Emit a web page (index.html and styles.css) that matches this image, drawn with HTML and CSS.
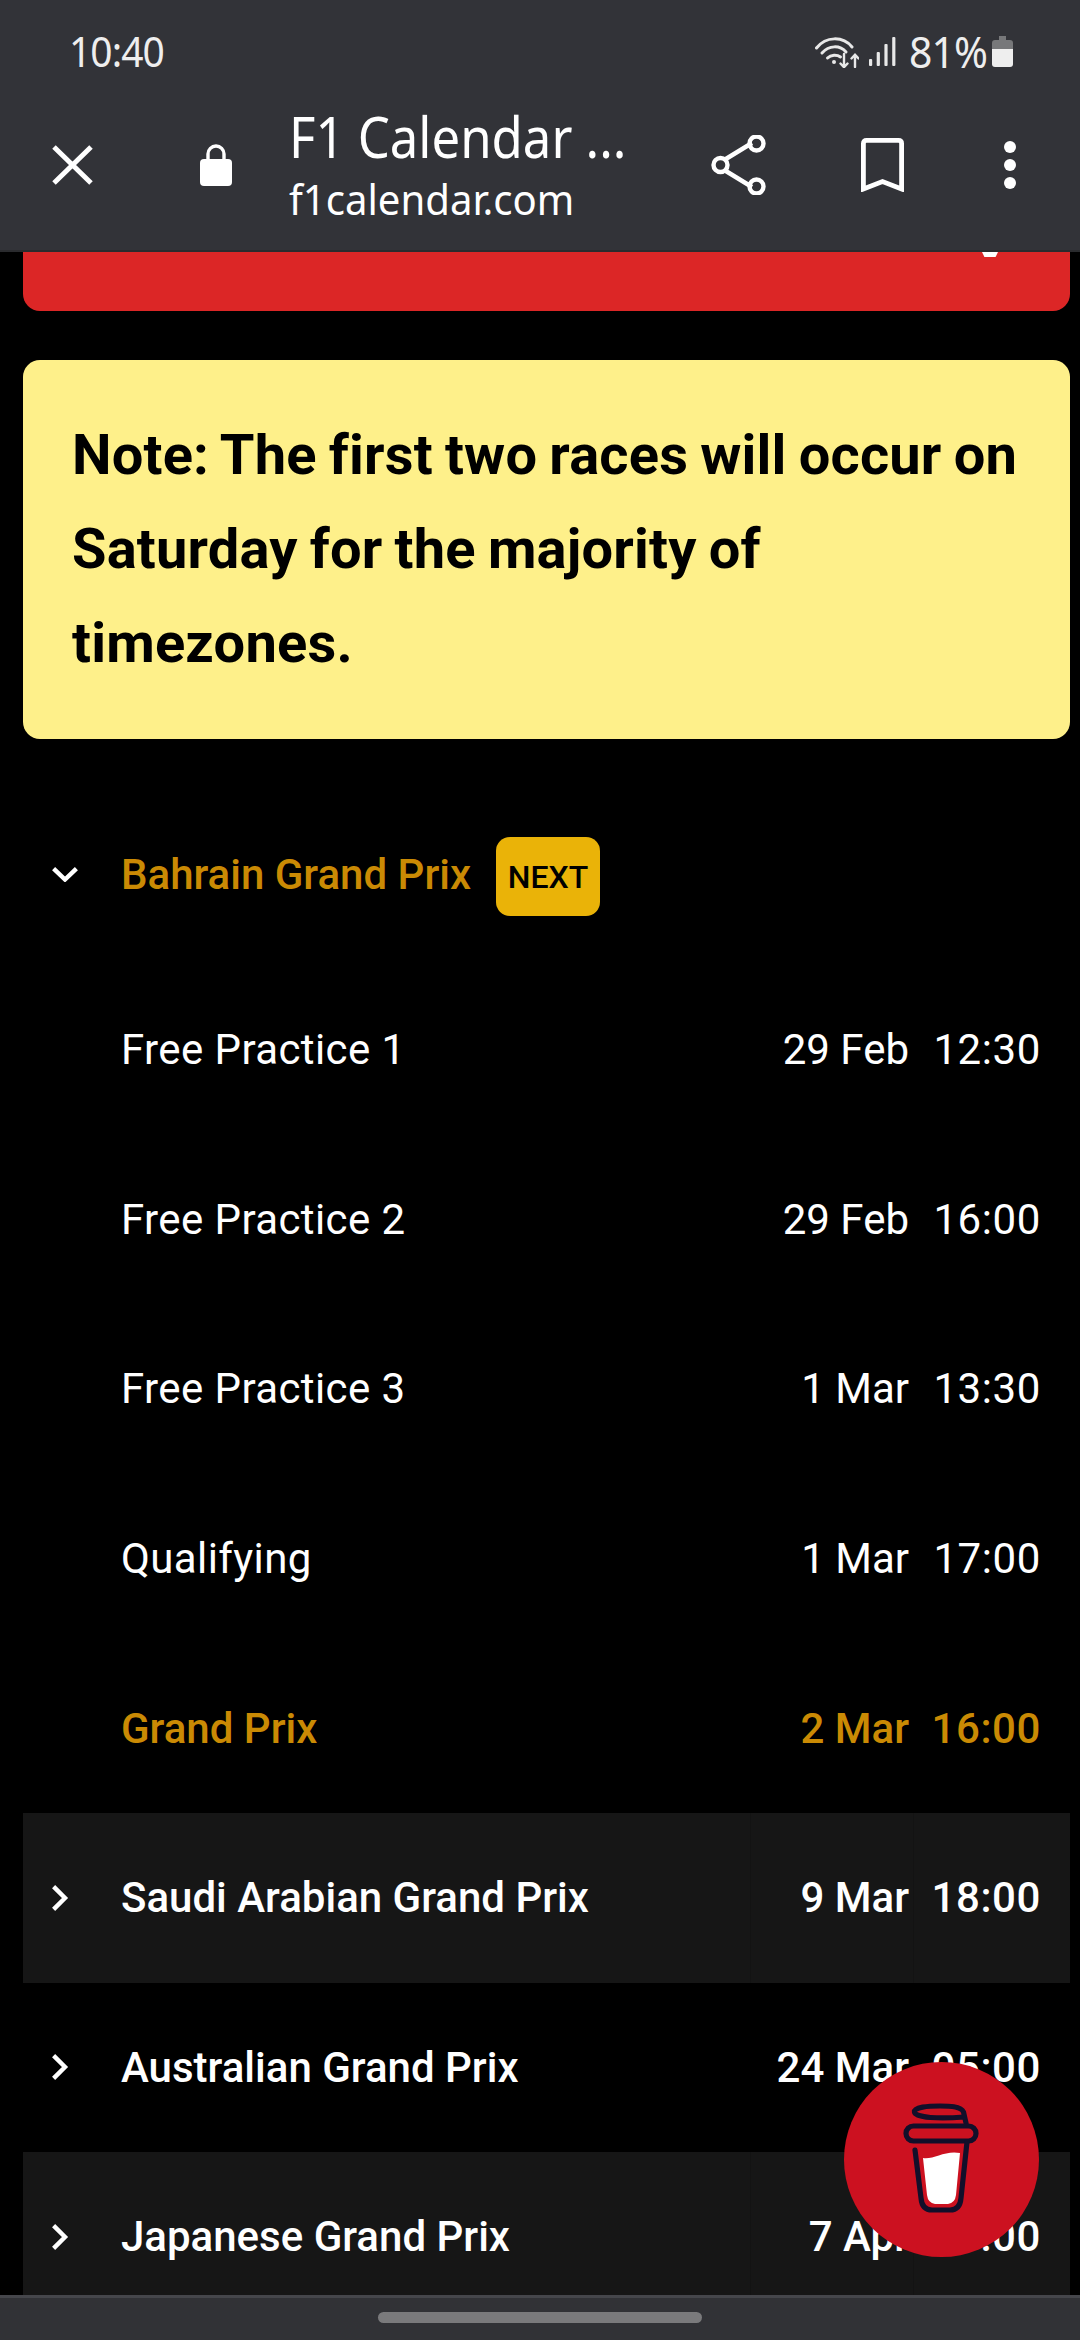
FILE: index.html
```
<!DOCTYPE html>
<html lang="en">
<head>
<meta charset="utf-8">
<title>F1 Calendar</title>
<link rel="stylesheet" href="styles.css">
</head>
<body>
<div class="screen">
  <header class="chrome">
    <div class="status">
      <span class="clock">10:40</span>
      <div class="status-right">
        <svg class="wifi" viewBox="0 0 44 31" width="44" height="31" fill="none" stroke="#e8e8e8" stroke-width="3" stroke-linecap="round">
          <path d="M1.500 11C11 -1 28 -1 37 10"/>
          <path d="M7 16C14 8 25 8 31 15"/>
          <path d="M12.500 21C16 17.500 22 17.500 25.500 20"/>
          <circle cx="19" cy="25" r="2" fill="#e8e8e8" stroke="none"/>
          <path d="M29 17V30M25.500 26.500L29 30.200 32.500 26.500" stroke-width="2.400"/>
          <path d="M40 30V18M36.500 21.500L40 17.800 43.500 21.500" stroke-width="2.400"/>
        </svg>
        <svg class="signal" viewBox="0 0 27 29" width="27" height="29" fill="#e8e8e8">
          <rect x="0" y="22" width="3.200" height="7" rx="1"/>
          <rect x="7.700" y="15" width="3.200" height="14" rx="1"/>
          <rect x="15.400" y="7" width="3.200" height="22" rx="1"/>
          <rect x="23.200" y="0" width="3.200" height="29" rx="1"/>
        </svg>
        <span class="pct">81%</span>
        <svg class="battery" viewBox="0 0 21 31" width="21" height="31">
          <path d="M7 0h7v4h4q3 0 3 3v6H0V7q0-3 3-3h4z" fill="#77787a"/>
          <path d="M0 13h21v15q0 3-3 3H3q-3 0-3-3z" fill="#eeeeee"/>
        </svg>
      </div>
    </div>
    <div class="toolbar">
      <svg class="ic" viewBox="0 0 41 40" width="41" height="40" fill="none" stroke="#fff" stroke-width="5"><path d="M2 2l37 36M39 2L2 38"/></svg>
      <svg class="ic" viewBox="0 0 32 42" width="32" height="42"><path d="M8 17v-7a8 8 0 0 1 16 0v7" fill="none" stroke="#fff" stroke-width="3.4"/><rect x="0" y="15" width="32" height="27" rx="4" fill="#fff"/></svg>
      <div class="page-id">
        <div class="page-title">F1 Calendar ...</div>
        <div class="page-url">f1calendar.com</div>
      </div>
      <svg class="ic" viewBox="0 0 55 60" width="55" height="60" fill="none" stroke="#fff" stroke-width="4.4"><path d="M14 24.500L41 8M14 35.500L41 52"/><circle cx="9.500" cy="30" r="7"/><circle cx="45.500" cy="8.500" r="7"/><circle cx="45.500" cy="51.500" r="7"/></svg>
      <svg class="ic" viewBox="0 0 43 54" width="43" height="54" fill="none" stroke="#fff" stroke-width="4.800"><path d="M2.400 51V5.500Q2.400 2.400 5.500 2.400H37.500Q40.600 2.400 40.600 5.500V51L21.500 43.500Z"/></svg>
      <svg class="ic" viewBox="0 0 12 48" width="12" height="48" fill="#fff"><circle cx="6" cy="6" r="6"/><circle cx="6" cy="24" r="6"/><circle cx="6" cy="42" r="6"/></svg>
    </div>
  </header>

  <main class="content">
    <div class="alert"><span class="alert-mark"></span></div>
    <div class="note">Note: The first two races will occur on Saturday for the majority of timezones.</div>

    <section class="schedule">
      <div class="row row-head accent">
        <div class="chev"><svg viewBox="0 0 26 15" width="26" height="15" fill="none" stroke="#fff" stroke-width="4.400"><path d="M1.600 1.600L13 12.500 24.400 1.600"/></svg></div>
        <div class="name"><span>Bahrain Grand Prix</span><span class="badge">NEXT</span></div>
      </div>
      <div class="row session"><div class="chev"></div><div class="name">Free Practice 1</div><div class="date">29 Feb</div><div class="time">12:30</div></div>
      <div class="row session"><div class="chev"></div><div class="name">Free Practice 2</div><div class="date">29 Feb</div><div class="time">16:00</div></div>
      <div class="row session"><div class="chev"></div><div class="name">Free Practice 3</div><div class="date">1 Mar</div><div class="time">13:30</div></div>
      <div class="row session"><div class="chev"></div><div class="name">Qualifying</div><div class="date">1 Mar</div><div class="time">17:00</div></div>
      <div class="row accent"><div class="chev"></div><div class="name">Grand Prix</div><div class="date">2 Mar</div><div class="time">16:00</div></div>
      <div class="row race shade">
        <div class="chev"><svg viewBox="0 0 17 26" width="17" height="26" fill="none" stroke="#fff" stroke-width="4.400"><path d="M1.600 1.600L13 13 1.600 24.400"/></svg></div>
        <div class="name">Saudi Arabian Grand Prix</div><div class="date">9 Mar</div><div class="time">18:00</div>
      </div>
      <div class="row race">
        <div class="chev"><svg viewBox="0 0 17 26" width="17" height="26" fill="none" stroke="#fff" stroke-width="4.400"><path d="M1.600 1.600L13 13 1.600 24.400"/></svg></div>
        <div class="name">Australian Grand Prix</div><div class="date">24 Mar</div><div class="time">05:00</div>
      </div>
      <div class="row race shade">
        <div class="chev"><svg viewBox="0 0 17 26" width="17" height="26" fill="none" stroke="#fff" stroke-width="4.400"><path d="M1.600 1.600L13 13 1.600 24.400"/></svg></div>
        <div class="name">Japanese Grand Prix</div><div class="date">7 Apr</div><div class="time">06:00</div>
      </div>
    </section>

    <div class="fab">
      <svg viewBox="0 0 120 140" width="120" height="140" fill="none" stroke="#120f2a" stroke-width="5.200" stroke-linecap="round" stroke-linejoin="round">
        <path d="M43 68C53 70 65 60 80 63L76 105Q75 113 68 114H55Q48 113 47 105Z" fill="#fff" stroke="none"/>
        <path d="M86 33L83.500 22C81 16 68 16 60 16C48 16 34 17 34.500 22C35 28 60 29 84 27"/>
        <rect x="26" y="36" width="70" height="15" rx="7.500"/>
        <path d="M35 60L41 108Q42 120 52 120H70Q80 120 81 108L87 52"/>
      </svg>
    </div>
  </main>

  <footer class="navbar"><span class="handle"></span></footer>
</div>
</body>
</html>
```

FILE: styles.css
```
* { box-sizing: border-box; }
html, body { margin: 0; padding: 0; background: #000; }
.screen {
  width: 1080px;
  height: 2340px;
  display: flex;
  flex-direction: column;
  overflow: hidden;
  background: #000;
  font-family: Roboto, sans-serif;
  color: #fff;
}

/* browser chrome */
.chrome {
  flex: none;
  height: 252px;
  background: #323338;
  border-bottom: 2px solid #2a2b2e;
  font-family: "Noto Sans", sans-serif;
}
.status {
  height: 100px;
  padding: 2px 67px 0 69px;
  display: flex;
  align-items: center;
  justify-content: space-between;
}
.clock {
  font-size: 41px;
  color: #eeeeee;
  letter-spacing: -1px;
  transform: scaleX(.95);
  transform-origin: left center;
}
.status-right { display: flex; align-items: center; }
.wifi { margin-right: 10px; margin-top: 3px; }
.signal { margin-right: 9px; }
.pct {
  font-size: 43px;
  color: #eeeeee;
  margin-right: 5px;
  letter-spacing: -1px;
  transform: scaleX(.95);
  transform-origin: right center;
}
.toolbar {
  height: 130px;
  padding-left: 52px;
  display: grid;
  grid-template-columns: 148px 89px 422px 150px 143px auto;
  align-items: center;
}
.ic { display: block; }
.page-id { padding-bottom: 4px; }
.page-title {
  font-size: 56px;
  line-height: 66px;
  white-space: nowrap;
  transform: scaleX(.908);
  transform-origin: left center;
}
.page-url {
  font-size: 42px;
  line-height: 50px;
  margin-top: 5px;
  white-space: nowrap;
  transform: scaleX(.955);
  transform-origin: left center;
}

/* content */
.content {
  flex: 1;
  min-height: 0;
  position: relative;
  overflow: hidden;
  padding: 0 10px 0 23px;
}
.alert {
  height: 59px;
  background: #dc2626;
  border-radius: 0 0 17px 17px;
  display: flex;
  justify-content: flex-end;
  padding-right: 72px;
}
.alert-mark {
  width: 16px;
  height: 5px;
  background: #fff;
  clip-path: polygon(0 0, 100% 0, 85% 100%, 15% 100%);
}
.note {
  margin-top: 49px;
  padding: 48px 38px 48px 49px;
  height: 379px;
  background: #fef08a;
  color: #000;
  border-radius: 17px;
  font-size: 56px;
  font-weight: 700;
  line-height: 94px;
  letter-spacing: .2px;
  word-spacing: -2px;
}
.schedule { margin-top: 44px; }
.row {
  display: grid;
  grid-template-columns: 98px 629px 163px 156px;
  height: 169.6px;
  align-items: stretch;
  font-size: 42px;
}
.row > div { display: flex; align-items: center; white-space: nowrap; }
.row-head { height: 182px; }
.chev { padding-left: 29px; }
.date { justify-content: flex-end; padding-right: 4px; }
.time { justify-content: flex-end; padding-right: 28px; letter-spacing: .6px; }
.session .name { letter-spacing: .4px; }
.accent, .race { font-weight: 500; }
.accent { color: #ca8a04; }
.shade { background: #161616; }
.shade > div + div + div { border-left: 1px solid #131313; }
.badge {
  margin: 5px 0 0 25px;
  width: 104px;
  height: 79px;
  background: #eab308;
  color: #000;
  border-radius: 14px;
  font-size: 32px;
  display: flex;
  align-items: center;
  justify-content: center;
}
.fab {
  position: absolute;
  left: 844px;
  top: 1810px;
  width: 195px;
  height: 195px;
  border-radius: 50%;
  background: #cc1120;
  padding: 28px 0 0 36px;
}
.fab svg { display: block; }

/* navigation bar */
.navbar {
  flex: none;
  height: 45px;
  background: #313236;
  border-top: 3px solid #45464b;
  display: flex;
  justify-content: center;
  padding-top: 14px;
}
.handle {
  width: 324px;
  height: 11px;
  border-radius: 6px;
  background: #7a7a7c;
}
```
